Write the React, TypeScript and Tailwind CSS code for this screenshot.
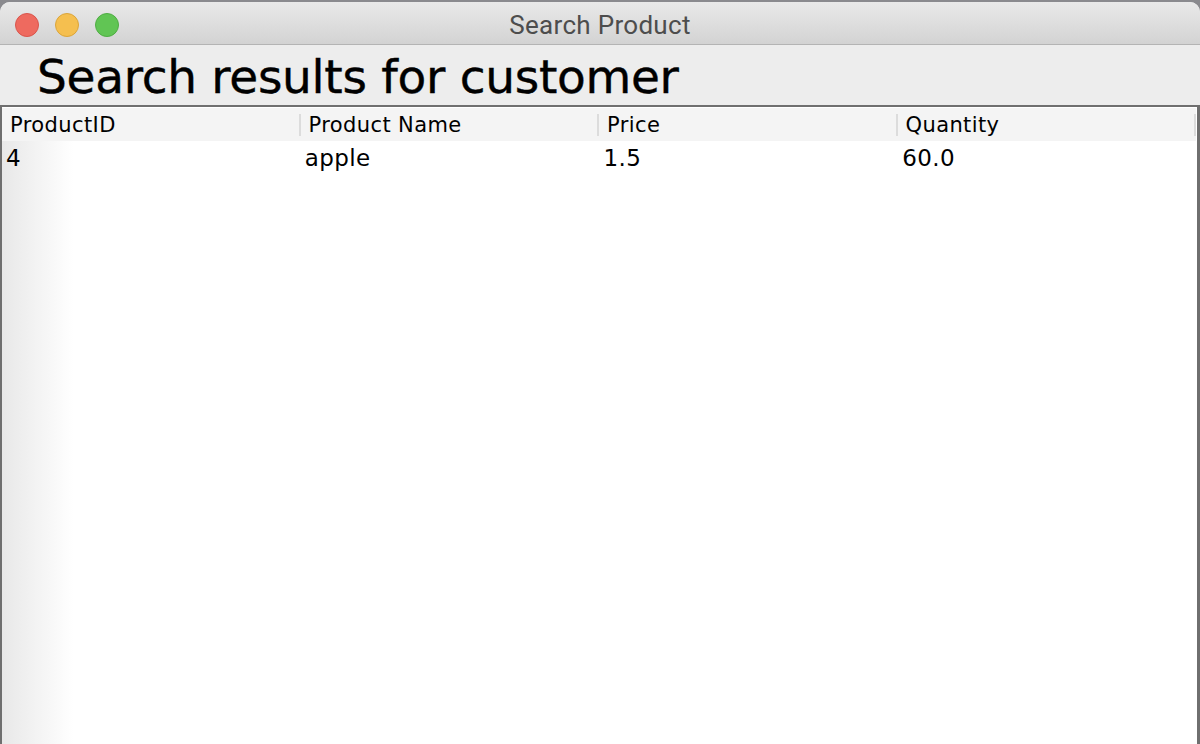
import React from 'react';

const columns = ['ProductID', 'Product Name', 'Price', 'Quantity'];
const rows = [['4', 'apple', '1.5', '60.0']];

const TrafficLights = () => (
  <div className="flex items-center gap-[16px] pl-[15px] pt-[4px]">
    <span className="w-[24px] h-[24px] rounded-full bg-[#ee6a5f] border border-[#d9554c]" />
    <span className="w-[24px] h-[24px] rounded-full bg-[#f5bf4f] border border-[#dba53a]" />
    <span className="w-[24px] h-[24px] rounded-full bg-[#61c554] border border-[#4fad43]" />
  </div>
);

export default function App() {
  return (
    <div className="w-[1200px] h-[744px] overflow-hidden bg-[#8a8a8e] pt-[2px]">
      <div className="flex flex-col h-full rounded-t-[10px] overflow-hidden bg-[#ededed]">
        {/* title bar */}
        <div className="relative h-[43px] shrink-0 flex items-center bg-gradient-to-b from-[#e9e9e9] to-[#d3d3d3] border-b border-[#b4b4b4]">
          <TrafficLights />
          <div className="absolute inset-0 flex items-center justify-center pt-[4px] text-[26px] tracking-[0.3px] text-[#4d4d4d] font-['Roboto',sans-serif]">
            Search Product
          </div>
        </div>

        {/* heading */}
        <div className="h-[60px] shrink-0 pl-[37px] flex items-end bg-[#ededed]">
          <h1 className="text-[47px] leading-none pb-[5px] text-black tracking-[-0.3px] [-webkit-text-stroke:0.4px_black] font-['DejaVu_Sans',sans-serif]">
            Search results for customer
          </h1>
        </div>

        {/* table */}
        <div className="flex-1 flex flex-col border-t-2 border-l-2 border-r-[3px] border-[#6f6f6f] bg-white font-['DejaVu_Sans',sans-serif]">
          <div className="h-[33px] shrink-0 grid grid-cols-4 bg-[#f4f4f4] mt-px mr-px">
            {columns.map(col => (
              <div key={col} className="flex items-center justify-between pl-[8px]">
                <span className="text-[21px] tracking-[0.4px] text-black pt-[2px]">{col}</span>
                <span className="w-[2px] h-[22px] bg-[#dcdcdc]" />
              </div>
            ))}
          </div>
          <div className="flex-1 bg-gradient-to-r from-[#e8e8e8] via-white via-[6%] to-white">
            {rows.map((row, i) => (
              <div key={i} className="h-[32px] grid grid-cols-4">
                {row.map((cell, j) => (
                  <div key={j} className="flex items-center pl-[4px] text-[23px] tracking-[0.4px] text-black">
                    {cell}
                  </div>
                ))}
              </div>
            ))}
          </div>
        </div>
      </div>
    </div>
  );
}
